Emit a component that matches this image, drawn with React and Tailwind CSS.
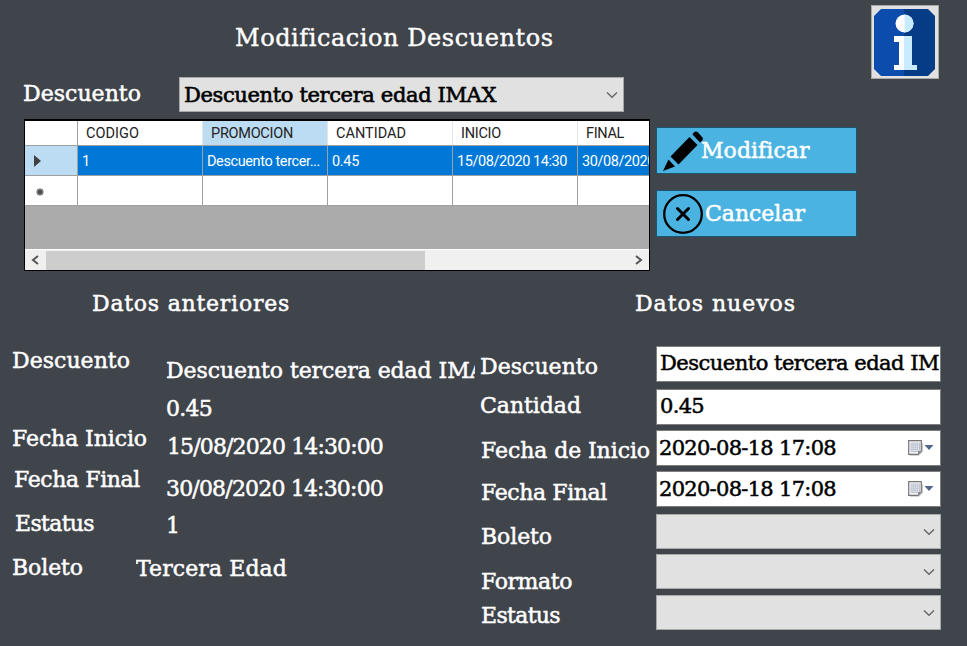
import { useLayoutEffect, useRef, useState } from "react";

// Text whose tracking is computed so that it fills a given width.
function Fit({ w, className = "", children }) {
  const ref = useRef(null);
  const [tracking, setTracking] = useState(0);
  useLayoutEffect(() => {
    const natural = ref.current.getBoundingClientRect().width;
    setTracking((w - natural) / children.length);
  }, []);
  return (
    <span
      ref={ref}
      className={`inline-block shrink-0 whitespace-pre ${className}`}
      style={{ letterSpacing: `${tracking}px` }}
    >
      {children}
    </span>
  );
}

function Label({ w, className = "", children }) {
  return (
    <Fit w={w} className={`h-6 self-start text-[22px] leading-6 [-webkit-text-stroke:0.5px_white] ${className}`}>
      {children}
    </Fit>
  );
}

function Chevron() {
  return (
    <svg className="h-2 w-3 shrink-0" viewBox="0 0 12 8" fill="none" stroke="#666" strokeWidth="1.4">
      <path d="M1 1.5 L6 6.2 L11 1.5" />
    </svg>
  );
}

function Combo({ className = "", children }) {
  return (
    <div className={`flex h-[35px] shrink-0 items-center justify-between border border-[#a5a7a9] bg-[#e1e1e1] pt-px pr-[5px] pl-1 text-black ${className}`}>
      <span className="flex">{children}</span>
      <Chevron />
    </div>
  );
}

function Field({ className = "", children }) {
  return (
    <div className={`flex h-9 shrink-0 items-center overflow-hidden border border-[#7c7e80] bg-white text-[21px] leading-6 text-black [-webkit-text-stroke:0.5px_black] ${className}`}>
      {children}
    </div>
  );
}

function CalendarIcon() {
  return (
    <svg className="h-4 w-[26px]" viewBox="0 0 26 16">
      <path d="M2 15.2H10.5L14.5 11.5V3" fill="none" stroke="#c9c9c9" strokeWidth="1.2" />
      <path d="M.7 .7H13.3V11L10 14.3H.7Z" fill="#f3f4f6" stroke="#777477" strokeWidth="1.2" />
      <path d="M3 3H11.5V11.5H3Z M3 5.1H11.5 M3 7.2H11.5 M3 9.3H11.5 M5.1 3V11.5 M7.2 3V11.5 M9.3 3V11.5" fill="none" stroke="#b3bbcb" strokeWidth=".8" />
      <path d="M10 14.3V11H13.3Z" fill="#888" />
      <path d="M16.5 5H25.5L21 10Z" fill="#50658c" />
    </svg>
  );
}

function DateField({ className }) {
  return (
    <Field className={`justify-between pr-[6px] pl-[2px] ${className}`}>
      <Fit w={177}>2020-08-18 17:08</Fit>
      <CalendarIcon />
    </Field>
  );
}

function InfoIcon() {
  return (
    <svg className="h-[67px] w-[61px]" viewBox="0 0 61 67">
      <path d="M7 0H31V67H7L0 60V7Z" fill="#0b4cad" />
      <path d="M30 0H54L61 7V60L54 67H30Z" fill="#063c86" />
      <circle cx="30.5" cy="14.5" r="9" fill="#fff" />
      <path d="M30.5 5.5A9 9 0 0 1 30.5 23.5Z" fill="#c9ebff" />
      <path d="M20 27H30.5V61H20V56H25V33H20Z" fill="#fff" />
      <path d="M30 27H38V56H43V61H30Z" fill="#c9ebff" />
    </svg>
  );
}

function PencilIcon() {
  return (
    <svg className="h-10 w-10 shrink-0" viewBox="0 0 40 40" fill="#000">
      <path d="M0 40L5.5 28.5L12 35.5Z" />
      <path d="M7.5 25.5L26.5 6L34.5 14L15.5 33.5Z" />
      <path d="M29.5 3.5Q31.5 -1 35 1.5L39.5 6.5Q41 9.5 37 11.5Z" />
    </svg>
  );
}

function CloseIcon() {
  return (
    <svg className="h-10 w-10 shrink-0" viewBox="0 0 40 40" fill="none" stroke="#000">
      <circle cx="20" cy="20" r="18.8" strokeWidth="2.3" />
      <path d="M14.5 14.5L25.5 25.5M25.5 14.5L14.5 25.5" strokeWidth="3" strokeLinecap="round" />
    </svg>
  );
}

const columns = [
  { name: "CODIGO", nameW: 53, value: "1", valueW: 8 },
  { name: "PROMOCION", nameW: 82, value: "Descuento tercer...", valueW: 113 },
  { name: "CANTIDAD", nameW: 70, value: "0.45", valueW: 27 },
  { name: "INICIO", nameW: 40, value: "15/08/2020 14:30", valueW: 110 },
  { name: "FINAL", nameW: 38, value: "30/08/2020 14:30", valueW: 110 },
];

function DataGrid() {
  return (
    <div className="ml-6 flex h-[152px] w-[626px] shrink-0 flex-col overflow-hidden border border-t-2 border-black bg-[#ababab] font-['Roboto',sans-serif] text-[14.5px] text-[#222]">
      <div className="flex h-[25px] shrink-0 border-b border-[#a0a0a0] bg-white">
        <div className="w-[53px] shrink-0 border-r border-[#a0a0a0]" />
        {columns.map((c) => (
          <div key={c.name} className={`flex w-[125px] shrink-0 items-center border-r border-[#e5e5e5] pt-[2px] pl-2 ${c.name === "PROMOCION" ? "bg-[#bcdcf4]" : ""}`}>
            <Fit w={c.nameW} className="leading-[22px]">{c.name}</Fit>
          </div>
        ))}
      </div>
      <div className="flex h-[30px] shrink-0 border-b border-[#a0a0a0] bg-[#0078d7] text-white">
        <div className="flex w-[53px] shrink-0 items-center border-r border-[#a0a0a0] bg-[#bcdcf4] pl-[9px]">
          <svg className="h-3 w-[7px]" viewBox="0 0 7 12"><path d="M0 0L7 6L0 12Z" fill="#404040" /></svg>
        </div>
        {columns.map((c) => (
          <div key={c.name} className="flex w-[125px] shrink-0 items-center border-r border-[#a0a0a0] pt-[3px] pl-1">
            <Fit w={c.valueW} className="leading-[26px]">{c.value}</Fit>
          </div>
        ))}
      </div>
      <div className="flex h-[30px] shrink-0 border-b border-[#a0a0a0] bg-white">
        <div className="flex w-[53px] shrink-0 items-center border-r border-[#a0a0a0] pl-[11px]">
          <svg className="mt-[3px] h-[8px] w-[8px]" viewBox="0 0 8 8" stroke="#505050" strokeWidth="1.5">
            <circle cx="4" cy="4" r="2.2" fill="#505050" stroke="none" />
            <path d="M4 .4V7.6M.4 4H7.6M1.4 1.4L6.6 6.6M6.6 1.4L1.4 6.6" />
          </svg>
        </div>
        {columns.map((c) => (
          <div key={c.name} className="w-[125px] shrink-0 border-r border-[#a0a0a0]" />
        ))}
      </div>
      <div className="grow" />
      <div className="flex h-[21px] shrink-0 items-center border-t border-white bg-[#f0f0f0]">
        <svg className="mr-[7px] ml-[6px] h-[10px] w-2" viewBox="0 0 8 10" fill="none" stroke="#555" strokeWidth="2"><path d="M7 1L2 5L7 9" /></svg>
        <div className="h-[19px] w-[379px] bg-[#cdcdcd]" />
        <svg className="mr-[6px] ml-auto h-[10px] w-2" viewBox="0 0 8 10" fill="none" stroke="#555" strokeWidth="2"><path d="M1 1L6 5L1 9" /></svg>
      </div>
    </div>
  );
}

export default function App() {
  return (
    <div className="flex h-[646px] w-[967px] flex-col overflow-hidden bg-[#40444b] font-['DejaVu_Serif',serif] text-white">
      <header className="flex h-[77px] shrink-0">
        <Fit w={318} className="mt-[26px] ml-[235px] text-[24px] leading-6 [-webkit-text-stroke:0.4px_white]">Modificacion Descuentos</Fit>
        <div className="mt-[5px] ml-[317px] flex h-[74px] w-[68px] shrink-0 items-center justify-center border border-[#a9a9a9] bg-[#e1e1e1]">
          <InfoIcon />
        </div>
      </header>

      <section className="flex h-[194px] shrink-0">
        <div className="flex w-[650px] shrink-0 flex-col">
          <div className="flex h-[42px] shrink-0">
            <Label w={118} className="mt-[5px] ml-[23px]">Descuento</Label>
            <Combo className="ml-[38px] w-[445px]">
              <Fit w={312} className="text-[21px] leading-6 [-webkit-text-stroke:0.6px_black]">Descuento tercera edad IMAX</Fit>
            </Combo>
          </div>
          <DataGrid />
        </div>
        <div className="flex flex-col gap-4 pt-[50px] pl-[6px] text-[22px] [-webkit-text-stroke:0.5px_white]">
          <button className="flex h-[47px] w-[201px] items-center border border-[#1c5670] bg-[#4bb3e1] pl-[6px]">
            <PencilIcon />
            <Fit w={108} className="-ml-[2px] leading-6">Modificar</Fit>
          </button>
          <button className="flex h-[47px] w-[201px] items-center border border-[#1c5670] bg-[#4bb3e1] pl-[6px]">
            <CloseIcon />
            <Fit w={100} className="ml-[2px] leading-6">Cancelar</Fit>
          </button>
        </div>
      </section>

      <div className="flex h-[70px] shrink-0 pt-[21px]">
        <Label w={198} className="ml-[92px]">Datos anteriores</Label>
        <Label w={161} className="ml-[345px]">Datos nuevos</Label>
      </div>

      <main className="flex h-[305px]">
        <div className="flex w-[136px] shrink-0 flex-col pl-3">
          <Label w={118} className="mt-[8px]">Descuento</Label>
          <Label w={135} className="mt-[54px]">Fecha Inicio</Label>
          <Label w={126} className="mt-[17px] ml-[2px]">Fecha Final</Label>
          <Label w={79} className="mt-[20px] ml-[3px]">Estatus</Label>
          <Label w={71} className="mt-[20px]">Boleto</Label>
        </div>
        <div className="flex w-[339px] shrink-0 flex-col overflow-hidden">
          <Label w={335} className="mt-[18px] ml-[30px]">Descuento tercera edad IMAX</Label>
          <Label w={46} className="mt-[14px] ml-[30px]">0.45</Label>
          <Label w={216} className="mt-[14px] ml-[31px]">15/08/2020 14:30:00</Label>
          <Label w={217} className="mt-[18px] ml-[30px]">30/08/2020 14:30:00</Label>
          <Label w={14} className="mt-[13px] ml-[30px]">1</Label>
          <Label w={151} className="mt-[19px]">Tercera Edad</Label>
        </div>
        <div className="flex w-[181px] shrink-0 flex-col pl-[5px]">
          <Label w={118} className="mt-[14px]">Descuento</Label>
          <Label w={101} className="mt-[15px]">Cantidad</Label>
          <Label w={169} className="mt-[21px] ml-[1px]">Fecha de Inicio</Label>
          <Label w={126} className="mt-[18px] ml-[1px]">Fecha Final</Label>
          <Label w={71} className="mt-[20px] ml-[1px]">Boleto</Label>
          <Label w={91} className="mt-[21px] ml-[1px]">Formato</Label>
          <Label w={79} className="mt-[10px] ml-[1px]">Estatus</Label>
        </div>
        <div className="flex w-[285px] shrink-0 flex-col pt-[5px]">
          <Field className="pb-[2px] pl-[3px]">
            <Fit w={279}>Descuento tercera edad IM</Fit>
          </Field>
          <Field className="mt-[7px] pb-[3px] pl-[3px]">
            <Fit w={44}>0.45</Fit>
          </Field>
          <DateField className="mt-[5px]" />
          <DateField className="mt-[5px]" />
          <Combo className="mt-[7px]" />
          <Combo className="mt-[5px]" />
          <Combo className="mt-[6px]" />
        </div>
      </main>
    </div>
  );
}
